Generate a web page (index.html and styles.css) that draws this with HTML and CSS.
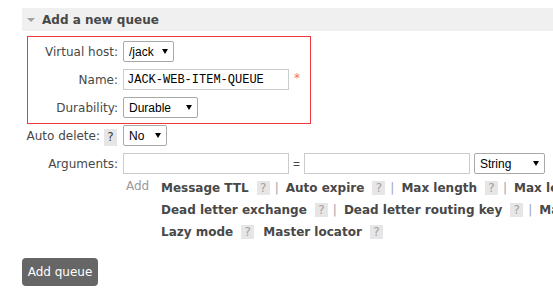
FILE: index.html
```html
<!DOCTYPE html>
<html>
<head>
<meta charset="utf-8">
<link rel="stylesheet" href="styles.css">
</head>
<body>
<div class="page">
  <div class="section-head"><span class="tri"></span><span class="section-title">Add a new queue</span></div>
  <div class="form">
    <div class="highlight">
      <div class="row">
        <div class="label">Virtual host:</div>
        <span class="sel w-vhost"><select><option>/jack</option></select></span>
      </div>
      <div class="row">
        <div class="label">Name:</div>
        <input class="text name" type="text" value="JACK-WEB-ITEM-QUEUE">
        <span class="req">*</span>
      </div>
      <div class="row">
        <div class="label">Durability:</div>
        <span class="sel w-dur"><select><option>Durable</option></select></span>
      </div>
    </div>
    <div class="row row-out first-out">
      <div class="label">Auto delete:<span class="help dark">?</span></div>
      <span class="sel w-no"><select><option>No</option></select></span>
    </div>
    <div class="row row-out">
      <div class="label">Arguments:</div>
      <input class="text arg" type="text">
      <span class="eq">=</span>
      <input class="text arg" type="text">
      <span class="sel w-str"><select><option>String</option></select></span>
    </div>
    <div class="arg-links">
      <span class="add">Add</span>
      <div class="links">
        <div class="line">
          <span class="lk">Message TTL</span><span class="help">?</span><span class="sep">|</span>
          <span class="lk">Auto expire</span><span class="help">?</span><span class="sep">|</span>
          <span class="lk">Max length</span><span class="help">?</span><span class="sep">|</span>
          <span class="lk">Max length bytes</span><span class="help">?</span><span class="sep">|</span>
          <span class="lk">Overflow behaviour</span><span class="help">?</span>
        </div>
        <div class="line">
          <span class="lk">Dead letter exchange</span><span class="help">?</span><span class="sep">|</span>
          <span class="lk">Dead letter routing key</span><span class="help">?</span><span class="sep">|</span>
          <span class="lk">Maximum priority</span><span class="help">?</span>
        </div>
        <div class="line">
          <span class="lk">Lazy mode</span><span class="help">?</span>
          <span class="lk">Master locator</span><span class="help">?</span>
        </div>
      </div>
    </div>
    <button class="btn" type="button">Add queue</button>
  </div>
</div>
</body>
</html>
```

FILE: styles.css
```css
html, body {
  margin: 0;
  padding: 0;
  overflow: hidden;
  background: #fff;
}
body {
  font-family: "DejaVu Sans", Verdana, sans-serif;
  font-size: 12px;
  color: #484848;
}
.page {
  padding: 8px 0 0 22px;
}
.section-head {
  height: 23px;
  background: #f0f0f0;
  display: flex;
  align-items: center;
}
.tri {
  width: 0;
  height: 0;
  border-top: 4px solid #a0a0a0;
  border-left: 4px solid transparent;
  border-right: 4px solid transparent;
  margin: 1px 7px 0 5px;
}
.section-title {
  font-weight: bold;
  font-size: 12px;
  color: #484848;
}
.highlight {
  margin: 5px 0 0 5px;
  width: 284px;
  box-sizing: border-box;
  border: 1px solid #ee3a3a;
  padding: 4px 0 5px 0;
}
.row {
  display: flex;
  align-items: center;
  height: 21px;
  margin-bottom: 7px;
}
.highlight .row:last-child {
  margin-bottom: 0;
}
.label {
  width: 90px;
  margin-right: 5px;
  text-align: right;
  white-space: nowrap;
  display: flex;
  justify-content: flex-end;
  align-items: center;
  flex-shrink: 0;
}
.row-out .label {
  width: 96px;
}
.first-out {
  margin-top: 1px;
}
.sel {
  position: relative;
  display: inline-block;
  height: 21px;
  flex-shrink: 0;
}
.sel select {
  appearance: none;
  -webkit-appearance: none;
  height: 21px;
  box-sizing: border-box;
  width: 100%;
  border: 1px solid #a9a9a9;
  border-radius: 2px;
  background: #fff;
  font-family: "Liberation Sans", Arial, sans-serif;
  font-size: 12px;
  color: #000;
  padding: 0 0 0 5px;
  margin: 0;
  outline: none;
}
.sel::after {
  content: "";
  position: absolute;
  right: 6px;
  top: 8px;
  width: 0;
  height: 0;
  border-top: 5px solid #000;
  border-left: 3px solid transparent;
  border-right: 3px solid transparent;
  pointer-events: none;
}
.w-vhost { width: 51px; }
.w-dur { width: 75px; }
.w-no { width: 44px; }
.w-str { width: 71px; }
.text {
  height: 21px;
  box-sizing: border-box;
  border: 1px solid #cccccc;
  margin: 0;
  padding: 0 3px;
  width: 166px;
  flex-shrink: 0;
  background: #fff;
  outline: none;
}
.name {
  font-family: "Liberation Mono", "Courier New", monospace;
  font-size: 12px;
  color: #000;
}
.req {
  color: #f07070;
  margin-left: 5px;
  align-self: flex-start;
  margin-top: 2px;
  font-size: 12px;
}
.eq {
  width: 15px;
  flex-shrink: 0;
  text-align: center;
  font-family: "Liberation Sans", Arial, sans-serif;
  color: #484848;
}
.arg + .sel {
  margin-left: 4px;
}
.help {
  display: inline-block;
  width: 13px;
  height: 14px;
  line-height: 14px;
  background: #e6e6e6;
  color: #a0a0a0;
  text-align: center;
  font-weight: normal;
  flex-shrink: 0;
}
.help.dark {
  color: #3a3a3a;
  height: 17px;
  line-height: 17px;
  margin-left: 4px;
  margin-right: 1px;
  margin-top: 4px;
}
.arg-links {
  display: flex;
  align-items: flex-start;
  margin: -4px 0 0 104px;
}
.add {
  color: #999;
  line-height: 16px;
  width: 35px;
  flex-shrink: 0;
  padding-top: 1px;
}
.links {
  flex-shrink: 0;
}
.line {
  display: flex;
  align-items: center;
  height: 22px;
  white-space: nowrap;
}
.lk {
  font-weight: bold;
  color: #484848;
  margin-right: 8px;
  flex-shrink: 0;
}
.line .help {
  margin-right: 5px;
}
.line .help + .lk {
  margin-left: 4px;
}
.sep {
  color: #9aa4b0;
  margin-right: 7px;
  flex-shrink: 0;
}
.btn {
  display: block;
  margin-top: 15px;
  width: 76px;
  height: 28px;
  background: #666;
  color: #fff;
  border: none;
  border-radius: 4px;
  font-family: "DejaVu Sans", Verdana, sans-serif;
  font-size: 12px;
  padding: 0;
}
```
